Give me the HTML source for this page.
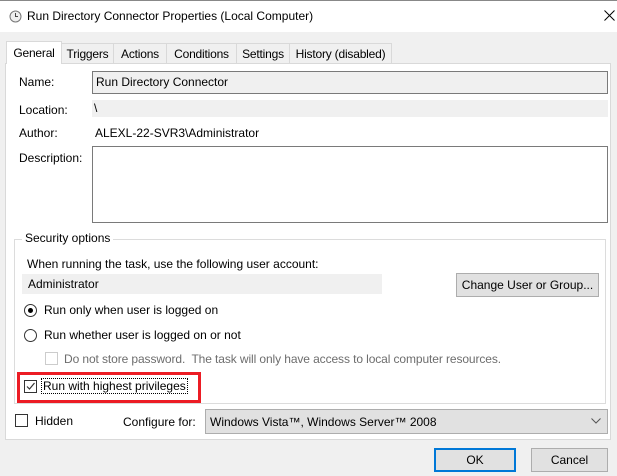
<!DOCTYPE html>
<html><head><style>
*{box-sizing:border-box;margin:0;padding:0}
body{width:617px;height:476px;background:#f0f0f0;font-family:"Liberation Sans",sans-serif;font-size:12px;color:#000;position:relative;overflow:hidden}
.a{position:absolute;white-space:nowrap}
.title{left:0;top:0;width:617px;height:32px;background:#fff;border-top:1px solid #888}
.tab{position:absolute;top:43px;height:20px;border:1px solid #d9d9d9;border-bottom:none;background:#f0f0f0;padding-top:3px;font-size:12px;white-space:nowrap;text-align:center;letter-spacing:-0.2px}
.panel{left:5px;top:63px;width:606px;height:377px;background:#fff;border:1px solid #d9d9d9}
.btn{position:absolute;background:#e1e1e1;border:1px solid #adadad;text-align:center;white-space:nowrap}
.radio{position:absolute;width:13px;height:13px;border:1px solid #333;border-radius:50%;background:#fff}
.cb{position:absolute;width:13px;height:13px;border:1px solid #333;background:#fff}
</style></head><body>
<div class="a title"></div>
<svg class="a" style="left:9px;top:10px" width="13" height="13" viewBox="0 0 13 13"><circle cx="6.5" cy="6.5" r="5.5" fill="#eee" stroke="#777"/><path d="M6.5 3v3.5h2.5" stroke="#444" fill="none"/></svg>
<div class="a" style="left:27px;top:9px;font-size:12px">Run Directory Connector Properties (Local Computer)</div>
<svg class="a" style="left:604px;top:10px" width="11" height="11"><path d="M0.5 0.5L10.5 10.5M10.5 0.5L0.5 10.5" stroke="#000"/></svg>
<div class="a panel"></div>
<div class="tab" style="left:61px;width:53px">Triggers</div>
<div class="tab" style="left:113px;width:54px">Actions</div>
<div class="tab" style="left:166px;width:71px">Conditions</div>
<div class="tab" style="left:236px;width:54px">Settings</div>
<div class="tab" style="left:289px;width:103px">History (disabled)</div>
<div class="tab" style="left:6px;top:41px;height:23px;background:#fff;width:56px;padding-top:4px">General</div>
<div class="a" style="left:19px;top:75px">Name:</div>
<div class="a" style="left:92px;top:71px;width:516px;height:23px;border:1px solid #7a7a7a;background:#f0f0f0;padding:3px 3px">Run Directory Connector</div>
<div class="a" style="left:19px;top:103px">Location:</div>
<div class="a" style="left:92px;top:100px;width:516px;height:17px;background:#f0f0f0;padding:1px 2px">\</div>
<div class="a" style="left:19px;top:126px">Author:</div>
<div class="a" style="left:95px;top:126px">ALEXL-22-SVR3\Administrator</div>
<div class="a" style="left:19px;top:151px">Description:</div>
<div class="a" style="left:92px;top:146px;width:516px;height:77px;border:1px solid #7a7a7a;background:#fff"></div>
<div class="a" style="left:14px;top:239px;width:592px;height:165px;border:1px solid #dcdcdc"></div>
<div class="a" style="left:22px;top:231px;background:#fff;padding:0 3px">Security options</div>
<div class="a" style="left:27px;top:257px">When running the task, use the following user account:</div>
<div class="a" style="left:22px;top:274px;width:360px;height:20px;background:#f0f0f0;padding:3px 6px">Administrator</div>
<div class="btn" style="left:456px;top:273px;width:143px;height:24px;padding-top:4px">Change User or Group...</div>
<div class="radio" style="left:24px;top:304px"></div><div class="a" style="left:28px;top:308px;width:5px;height:5px;border-radius:50%;background:#000"></div>
<div class="a" style="left:44px;top:303px">Run only when user is logged on</div>
<div class="radio" style="left:24px;top:329px"></div>
<div class="a" style="left:44px;top:328px">Run whether user is logged on or not</div>
<div class="cb" style="left:45px;top:352px;border-color:#ccc"></div>
<div class="a" style="left:64px;top:352px;color:#6d6d6d;letter-spacing:-0.1px">Do not store password.&nbsp; The task will only have access to local computer resources.</div>
<div class="a" style="left:17px;top:372px;width:184px;height:31px;border:3px solid #ec1c24"></div>
<div class="cb" style="left:24px;top:380px"></div>
<svg class="a" style="left:25px;top:381px" width="11" height="11"><path d="M2 5.5l2.5 2.5 5-6" stroke="#333" fill="none" stroke-width="1.2"/></svg>
<div class="a" style="left:41px;top:378px;border:1px dotted #000;padding:0 1px;height:16px">Run with highest privileges</div>
<div class="cb" style="left:15px;top:414px"></div>
<div class="a" style="left:35px;top:414px">Hidden</div>
<div class="a" style="left:123px;top:415px">Configure for:</div>
<div class="a" style="left:205px;top:409px;width:403px;height:25px;background:#e1e1e1;border:1px solid #adadad;padding:5px 4px">Windows Vista™, Windows Server™ 2008</div>
<svg class="a" style="left:591px;top:418px" width="10" height="6"><path d="M0.5 0.5l4.5 4.5 4.5-4.5" stroke="#555" fill="none"/></svg>
<div class="btn" style="left:434px;top:448px;width:82px;height:24px;border:2px solid #0078d7;padding-top:3px">OK</div>
<div class="btn" style="left:531px;top:448px;width:77px;height:24px;padding-top:4px">Cancel</div>
</body></html>
